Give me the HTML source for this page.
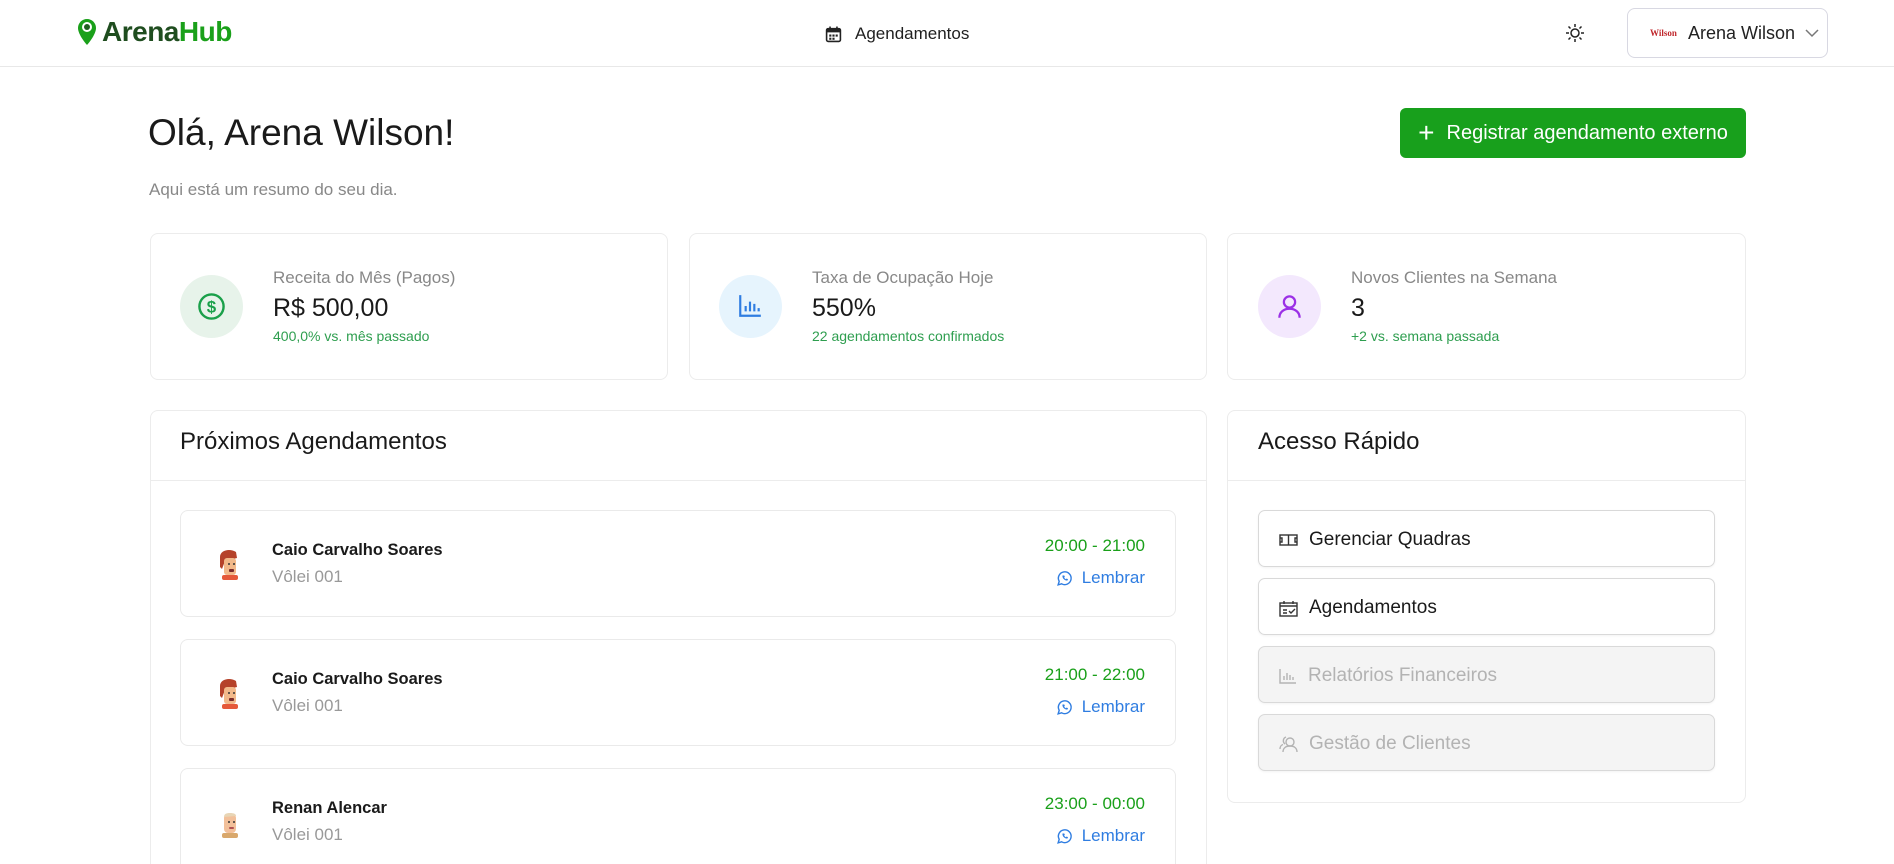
<!DOCTYPE html>
<html><head><meta charset="utf-8"><style>
*{box-sizing:border-box;margin:0;padding:0}
html,body{width:1894px;height:864px;overflow:hidden}
body{background:#fff;font-family:"Liberation Sans",sans-serif;color:#1f1f1f}
#wrap{position:relative;width:1894px;height:864px;overflow:hidden}
.abs{position:absolute}
.hdr{left:0;top:0;width:1894px;height:67px;border-bottom:1px solid #e8e8e8}
.card{border:1px solid #ececec;border-radius:8px;background:#fff}
.lbl{font-size:17px;color:#888}
.val{font-size:25px;color:#1a1a1a}
.sub{font-size:14px;color:#2e9e4f}
.item{left:180px;width:996px;height:107px;border:1px solid #eaeaea;border-radius:8px}
.nm{position:absolute;left:91px;top:30px;font-size:16.5px;font-weight:bold;color:#1a1a1a}
.ct{position:absolute;left:91px;top:56px;font-size:17px;color:#999}
.tm{position:absolute;right:30px;top:25px;font-size:17px;color:#1aa01a}
.lb{position:absolute;right:30px;top:57px;font-size:17px;color:#2f7de1;display:flex;align-items:center;gap:9px}
.qb{left:1258px;width:457px;height:57px;border:1px solid #d9d9d9;border-radius:7px;display:flex;align-items:center;padding-left:20px;padding-top:3px;gap:11px;font-size:19px;color:#1a1a1a;box-shadow:0 1px 2px rgba(0,0,0,.05)}
.qb.dis{background:#f4f4f4;color:#b3b3b3}
</style></head><body><div id="wrap">
<div class="abs hdr"></div>
<div class="abs" style="left:77px;top:16px;display:flex;align-items:center;gap:5px">
<svg width="20" height="28" viewBox="0 0 20 28"><path d="M10 1C5 1 1 5 1 10c0 7 9 17 9 17s9-10 9-17c0-5-4-9-9-9z" fill="#1aa01a"/><circle cx="10" cy="9" r="5" fill="#fff"/><circle cx="10" cy="9" r="3" fill="#1f5f1f"/></svg>
<span style="font-size:28px;font-weight:bold;color:#1f4d1f;letter-spacing:-0.5px">Arena<span style="color:#1aa01a">Hub</span></span></div>
<div class="abs" style="left:825px;top:24px;display:flex;align-items:center;gap:13px;font-size:17px;color:#1f1f1f">
<svg width="17" height="17" viewBox="0 0 16 16"><rect x="1.5" y="2.5" width="13" height="12" rx="1.5" fill="none" stroke="#222" stroke-width="1.5"/><rect x="1.5" y="2.5" width="13" height="3.5" fill="#222"/><rect x="4" y="0.5" width="1.5" height="3" fill="#222"/><rect x="10.5" y="0.5" width="1.5" height="3" fill="#222"/><g fill="#222"><rect x="4" y="8" width="2" height="2"/><rect x="7" y="8" width="2" height="2"/><rect x="10" y="8" width="2" height="2"/><rect x="4" y="11" width="2" height="2"/><rect x="7" y="11" width="2" height="2"/></g></svg>Agendamentos</div>
<svg class="abs" style="left:1565px;top:23px" width="20" height="20" viewBox="0 0 20 20" fill="none" stroke="#222" stroke-width="1.5"><circle cx="10" cy="10" r="4"/><path d="M10 1v3M10 16v3M1 10h3M16 10h3M3.5 3.5l2 2M14.5 14.5l2 2M3.5 16.5l2-2M14.5 5.5l2-2"/></svg>
<div class="abs" style="left:1627px;top:8px;width:201px;height:50px;border:1px solid #d8d8e2;border-radius:8px;display:flex;align-items:center;padding-left:22px;font-size:18px;color:#222;white-space:nowrap">
<span style="font-family:'Liberation Serif',serif;font-size:9px;color:#c0282d;font-weight:bold;width:26px">Wilson</span>
<span style="margin-left:12px">Arena Wilson</span>
<svg style="margin-left:10px" width="14" height="9" viewBox="0 0 14 9"><path d="M1 1l6 6 6-6" fill="none" stroke="#777" stroke-width="1.5"/></svg></div>
<div class="abs" style="left:148px;top:112px;font-size:37px;color:#1a1a1a">Olá, Arena Wilson!</div>
<div class="abs" style="left:149px;top:180px;font-size:17px;color:#888">Aqui está um resumo do seu dia.</div>
<div class="abs" style="left:1400px;top:108px;width:346px;height:50px;background:#18a01c;border-radius:6px;color:#fff;font-size:20px;display:flex;align-items:center;justify-content:center;gap:12px"><span style="font-size:28px;font-weight:300;line-height:1">+</span>Registrar agendamento externo</div>

<div class="abs card" style="left:150px;top:233px;width:518px;height:147px"></div>
<div class="abs card" style="left:689px;top:233px;width:518px;height:147px"></div>
<div class="abs card" style="left:1227px;top:233px;width:519px;height:147px"></div>
<div class="abs" style="left:180px;top:275px;width:63px;height:63px;border-radius:50%;background:#e7f3ea"></div>
<svg class="abs" style="left:197px;top:292px" width="29" height="29" viewBox="0 0 24 24"><circle cx="12" cy="12" r="10" fill="none" stroke="#1aa04a" stroke-width="2"/><text x="12" y="17" text-anchor="middle" font-size="14" font-weight="bold" fill="#1aa04a" font-family="Liberation Sans">$</text></svg>
<div class="abs lbl" style="left:273px;top:268px">Receita do Mês (Pagos)</div>
<div class="abs val" style="left:273px;top:294px">R$ 500,00</div>
<div class="abs sub" style="left:273px;top:328px">400,0% vs. mês passado</div>
<div class="abs" style="left:719px;top:275px;width:63px;height:63px;border-radius:50%;background:#e6f4fd"></div>
<svg class="abs" style="left:737px;top:293px" width="26" height="26" viewBox="0 0 24 24" fill="none" stroke="#2f7de1" stroke-width="2"><path d="M3 2v19h19M8 17v-5M12 17V8M16 17v-7M20 17v-3"/></svg>
<div class="abs lbl" style="left:812px;top:268px">Taxa de Ocupação Hoje</div>
<div class="abs val" style="left:812px;top:294px">550%</div>
<div class="abs sub" style="left:812px;top:328px">22 agendamentos confirmados</div>
<div class="abs" style="left:1258px;top:275px;width:63px;height:63px;border-radius:50%;background:#f3e8fd"></div>
<svg class="abs" style="left:1276px;top:293px" width="27" height="27" viewBox="0 0 24 24" fill="none" stroke="#9b30e6" stroke-width="2"><circle cx="12" cy="8" r="5"/><path d="M3 22c0-5 4-8 9-8s9 3 9 8"/></svg>
<div class="abs lbl" style="left:1351px;top:268px">Novos Clientes na Semana</div>
<div class="abs val" style="left:1351px;top:294px">3</div>
<div class="abs sub" style="left:1351px;top:328px">+2 vs. semana passada</div>

<div class="abs card" style="left:150px;top:410px;width:1057px;height:454px;border-bottom:none;border-bottom-left-radius:0;border-bottom-right-radius:0"></div>
<div class="abs" style="left:150px;top:480px;width:1057px;border-top:1px solid #ececec"></div>
<div class="abs" style="left:180px;top:428px;font-size:24px;color:#1a1a1a">Próximos Agendamentos</div>
<div class="abs card" style="left:1227px;top:410px;width:519px;height:393px"></div>
<div class="abs" style="left:1227px;top:480px;width:519px;border-top:1px solid #ececec"></div>
<div class="abs" style="left:1258px;top:428px;font-size:24px;color:#1a1a1a">Acesso Rápido</div>

<div class="abs item" style="top:510px">
<svg style="position:absolute;left:34px;top:36px" width="26" height="34" viewBox="0 0 26 34"><path d="M5 10c0-7 10-9 16-5l1 6-12 3-3 8-2-2z" fill="#b5422a"/><rect x="9" y="11" width="12" height="17" rx="3" fill="#f2b98a"/><rect x="7" y="28" width="16" height="5" rx="2" fill="#e5593a"/><circle cx="14" cy="17" r="1" fill="#333"/><circle cx="19" cy="17" r="1" fill="#333"/><rect x="14" y="22" width="5" height="3" rx="1" fill="#7a2a2a"/></svg>
<div class="nm">Caio Carvalho Soares</div><div class="ct">Vôlei 001</div>
<div class="tm">20:00 - 21:00</div>
<div class="lb"><svg width="17" height="17" viewBox="0 0 24 24" fill="none" stroke="#2f7de1" stroke-width="2"><path d="M3 21l1.5-5A9 9 0 1 1 8 19.5z"/><path d="M9 8c0 4 3 7 7 7l1-2-2-1-1 1c-1-.5-2-1.5-2.5-2.5l1-1-1-2z" fill="#2f7de1" stroke="none"/></svg>Lembrar</div></div>
<div class="abs item" style="top:639px">
<svg style="position:absolute;left:34px;top:36px" width="26" height="34" viewBox="0 0 26 34"><path d="M5 10c0-7 10-9 16-5l1 6-12 3-3 8-2-2z" fill="#b5422a"/><rect x="9" y="11" width="12" height="17" rx="3" fill="#f2b98a"/><rect x="7" y="28" width="16" height="5" rx="2" fill="#e5593a"/><circle cx="14" cy="17" r="1" fill="#333"/><circle cx="19" cy="17" r="1" fill="#333"/><rect x="14" y="22" width="5" height="3" rx="1" fill="#7a2a2a"/></svg>
<div class="nm">Caio Carvalho Soares</div><div class="ct">Vôlei 001</div>
<div class="tm">21:00 - 22:00</div>
<div class="lb"><svg width="17" height="17" viewBox="0 0 24 24" fill="none" stroke="#2f7de1" stroke-width="2"><path d="M3 21l1.5-5A9 9 0 1 1 8 19.5z"/><path d="M9 8c0 4 3 7 7 7l1-2-2-1-1 1c-1-.5-2-1.5-2.5-2.5l1-1-1-2z" fill="#2f7de1" stroke="none"/></svg>Lembrar</div></div>
<div class="abs item" style="top:768px;height:96px;border-bottom:none;border-bottom-left-radius:0;border-bottom-right-radius:0">
<svg style="position:absolute;left:34px;top:36px" width="26" height="34" viewBox="0 0 26 34"><rect x="9" y="9" width="12" height="19" rx="4" fill="#f2c09a"/><path d="M9 12c0-3 2-4 6-4s6 1 6 3z" fill="#e8d5b5"/><rect x="7" y="28" width="16" height="5" rx="2" fill="#d9a86c"/><circle cx="14" cy="17" r="1" fill="#333"/><circle cx="19" cy="17" r="1" fill="#333"/><rect x="14" y="22" width="5" height="2" rx="1" fill="#b05050"/></svg>
<div class="nm">Renan Alencar</div><div class="ct">Vôlei 001</div>
<div class="tm">23:00 - 00:00</div>
<div class="lb"><svg width="17" height="17" viewBox="0 0 24 24" fill="none" stroke="#2f7de1" stroke-width="2"><path d="M3 21l1.5-5A9 9 0 1 1 8 19.5z"/><path d="M9 8c0 4 3 7 7 7l1-2-2-1-1 1c-1-.5-2-1.5-2.5-2.5l1-1-1-2z" fill="#2f7de1" stroke="none"/></svg>Lembrar</div></div>

<div class="abs qb" style="top:510px"><svg width="19" height="12" viewBox="0 0 19 12" fill="none" stroke="#333" stroke-width="1.4"><rect x="1" y="1" width="17" height="10"/><path d="M9.5 1v10M1 4h2v4H1M18 4h-2v4h2"/></svg>Gerenciar Quadras</div>
<div class="abs qb" style="top:578px"><svg width="19" height="17" viewBox="0 0 19 17" fill="none" stroke="#333" stroke-width="1.4"><rect x="1" y="3" width="17" height="13"/><path d="M1 6h17M5 1v3M14 1v3M4 10h4M4 13h4M10 11l2 2 4-4"/></svg>Agendamentos</div>
<div class="abs qb dis" style="top:646px"><svg width="18" height="16" viewBox="0 0 18 16" fill="none" stroke="#b3b3b3" stroke-width="1.4"><path d="M1 1v14h16M5 12V8M8 12V5M11 12V7M14 12V9"/></svg>Relatórios Financeiros</div>
<div class="abs qb dis" style="top:714px"><svg width="19" height="18" viewBox="0 0 19 18" fill="none" stroke="#b3b3b3" stroke-width="1.4"><circle cx="11" cy="7" r="4"/><path d="M4 17c0-4 3-6 7-6s7 2 7 6M7 2a4 4 0 0 0-1 7M1 14c0-2 1-4 3-4.5"/></svg>Gestão de Clientes</div>
</div></body></html>
